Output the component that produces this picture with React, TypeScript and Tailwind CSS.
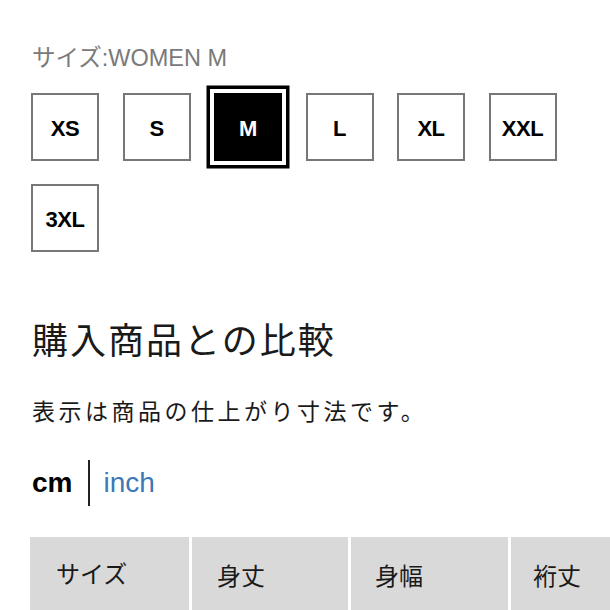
import React from "react";

const sizes = ["XS", "S", "M", "L", "XL", "XXL", "3XL"];
const cols = [
  { label: "サイズ", w: "w-[159px]", pl: "pl-[26px]", pb: "pb-[5px]" },
  { label: "身丈", w: "w-[156px]", pl: "pl-[25px]", pb: "pb-0" },
  { label: "身幅", w: "w-[157px]", pl: "pl-[24px]", pb: "pb-0" },
  { label: "裄丈", w: "w-[157px]", pl: "pl-[22px]", pb: "pb-0" },
];

export default function App() {
  return (
    <div
      className="w-[610px] h-[610px] overflow-hidden bg-white"
      style={{ fontFamily: '"Liberation Sans", "Noto Sans CJK JP", sans-serif' }}
    >
      <div className="pl-[31px] pt-[44px]">
        <div className="text-[23.5px] leading-[28px] text-[#7a7a7a] pl-px">サイズ:WOMEN M</div>
        <div className="mt-[21px] flex flex-wrap gap-x-[23.5px] gap-y-[23px] w-[560px]">
          {sizes.map((s) =>
            s === "M" ? (
              <div
                key={s}
                className="w-[68px] h-[68px] bg-black flex items-center justify-center shadow-[0_0_0_4px_#fff,0_0_0_7.5px_#000]"
              >
                <span className="text-white font-bold text-[22px] leading-none pt-[3px] tracking-[-0.5px]">{s}</span>
              </div>
            ) : (
              <div
                key={s}
                className="w-[68px] h-[68px] border-2 border-[#777] bg-white flex items-center justify-center"
              >
                <span className="text-black font-bold text-[22px] leading-none pt-[3px] tracking-[-0.5px]">{s}</span>
              </div>
            )
          )}
        </div>
        <h2 className="mt-[68px] text-[36px] leading-[44px] tracking-[2px] text-[#1a1a1a] pl-px">
          購入商品との比較
        </h2>
        <p className="mt-[32px] text-[23px] leading-[32px] tracking-[3.5px] text-[#1a1a1a] pl-px">
          表示は商品の仕上がり寸法です。
        </p>
        <div className="mt-[32px] h-[46px] flex items-center pl-px">
          <span className="text-[28px] font-bold text-black leading-none">cm</span>
          <span className="ml-[16px] w-[2px] h-[46px] bg-[#222]" />
          <span className="ml-[13px] text-[28px] text-[#3b78b8] leading-none">inch</span>
        </div>
      </div>
      <div className="mt-[31px] pl-[30px] flex gap-[3px]">
        {cols.map((c) => (
          <div
            key={c.label}
            className={`${c.w} ${c.pl} ${c.pb} shrink-0 h-[80px] bg-[#d9d9d9] flex items-center text-[24px] text-[#1a1a1a]`}
          >
            {c.label}
          </div>
        ))}
      </div>
    </div>
  );
}
